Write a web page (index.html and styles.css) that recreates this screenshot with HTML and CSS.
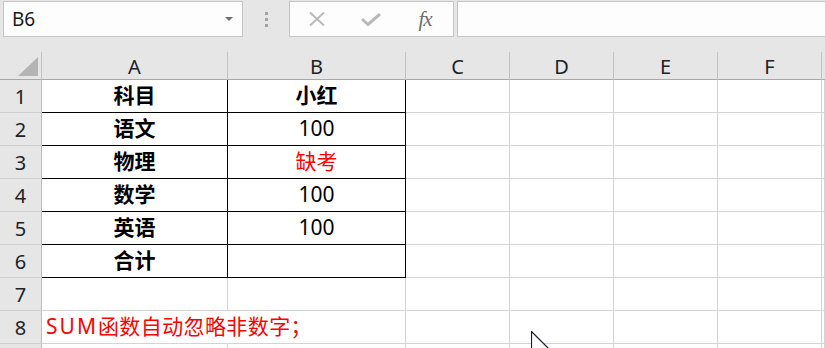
FILE: index.html
```html
<!DOCTYPE html>
<html lang="zh-CN">
<head>
  <meta charset="UTF-8">
  <meta name="viewport" content="width=device-width, initial-scale=1.0">
  <title>SUM 函数</title>
  <link rel="stylesheet" href="styles.css">
</head>
<body>
  <div class="toolbar">
    <div class="name-box">
      <span>B6</span>
      <span class="drop-arrow"></span>
    </div>
    <div class="grip">
      <span></span><span></span><span></span>
    </div>
    <div class="fx-box">
      <span class="fx-btn">
        <svg width="16" height="14" viewBox="0 0 16 14"><path d="M1 0.5 L15 13.5 M15 0.5 L1 13.5" stroke="#b9b9b9" stroke-width="2" fill="none"/></svg>
      </span>
      <span class="fx-btn">
        <svg width="20" height="13" viewBox="0 0 20 13"><path d="M1 6 L7 11.5 L19 1" stroke="#b9b9b9" stroke-width="3" fill="none"/></svg>
      </span>
      <span class="fx-btn fx-text">fx</span>
    </div>
    <div class="formula-input"></div>
  </div>

  <div class="sheet">
    <!-- cabecera de columnas -->
    <div class="corner"><span class="corner-tri"></span></div>
    <div class="col-head">A</div>
    <div class="col-head">B</div>
    <div class="col-head">C</div>
    <div class="col-head">D</div>
    <div class="col-head">E</div>
    <div class="col-head">F</div>
    <div class="col-head last"></div>

    <div class="row-head">1</div>
    <div class="cell tb bold">科目</div>
    <div class="cell tb bold">小红</div>
    <div class="cell"></div><div class="cell"></div><div class="cell"></div><div class="cell"></div><div class="cell"></div>

    <div class="row-head">2</div>
    <div class="cell tb bold">语文</div>
    <div class="cell tb">100</div>
    <div class="cell"></div><div class="cell"></div><div class="cell"></div><div class="cell"></div><div class="cell"></div>

    <div class="row-head">3</div>
    <div class="cell tb bold">物理</div>
    <div class="cell tb red">缺考</div>
    <div class="cell"></div><div class="cell"></div><div class="cell"></div><div class="cell"></div><div class="cell"></div>

    <div class="row-head">4</div>
    <div class="cell tb bold">数学</div>
    <div class="cell tb">100</div>
    <div class="cell"></div><div class="cell"></div><div class="cell"></div><div class="cell"></div><div class="cell"></div>

    <div class="row-head">5</div>
    <div class="cell tb bold">英语</div>
    <div class="cell tb">100</div>
    <div class="cell"></div><div class="cell"></div><div class="cell"></div><div class="cell"></div><div class="cell"></div>

    <div class="row-head">6</div>
    <div class="cell tb bold">合计</div>
    <div class="cell tb"></div>
    <div class="cell"></div><div class="cell"></div><div class="cell"></div><div class="cell"></div><div class="cell"></div>

    <div class="row-head">7</div>
    <div class="cell"></div><div class="cell"></div><div class="cell"></div><div class="cell"></div><div class="cell"></div><div class="cell"></div><div class="cell"></div>

    <div class="row-head">8</div>
    <div class="cell note"><span class="latin">SUM</span>函数自动忽略非数字；</div>
    <div class="cell"></div><div class="cell"></div><div class="cell"></div><div class="cell"></div><div class="cell"></div><div class="cell"></div>

    <!-- fila 9: solo asoma el borde superior -->
    <div class="row-head"></div>
    <div class="cell"></div><div class="cell"></div><div class="cell"></div><div class="cell"></div><div class="cell"></div><div class="cell"></div><div class="cell"></div>
  </div>

  <svg class="cursor" width="20" height="30" viewBox="0 0 20 30">
    <path d="M0.5 0.5 L0.5 24 L6 18.5 L10 27.5 L13 26.2 L9.2 17.5 L17.5 17.5 Z" fill="#fff" stroke="#1a1a2a" stroke-width="1.2"/>
  </svg>
</body>
</html>
```

FILE: styles.css
```css
* {
  margin: 0;
  padding: 0;
  box-sizing: border-box;
}

body {
  font-family: "Noto Sans", "Noto Sans CJK SC", sans-serif;
  background: #fff;
  width: 825px;
  height: 348px;
  overflow: hidden;
  position: relative;
  color: #000;
}

/* Barra de fórmulas */
.toolbar {
  display: flex;
  align-items: flex-start;
  height: 52px;
  padding: 1px 0 0 3px;
  background: #e6e6e6;
}

.name-box {
  width: 240px;
  height: 36px;
  border: 1px solid #c6c6c6;
  background: #fdfdfd;
  display: flex;
  align-items: center;
  justify-content: space-between;
  padding: 0 9px 0 8px;
  font-size: 19px;
  color: #1a1a1a;
}

.drop-arrow {
  width: 0;
  height: 0;
  border-left: 4px solid transparent;
  border-right: 4px solid transparent;
  border-top: 4px solid #6d6d6d;
}

.grip {
  width: 46px;
  height: 36px;
  display: flex;
  flex-direction: column;
  align-items: center;
  justify-content: center;
  gap: 3px;
}

.grip span {
  width: 3px;
  height: 3px;
  background: #a3a3a3;
}

.fx-box {
  width: 165px;
  height: 36px;
  border: 1px solid #c6c6c6;
  background: #fdfdfd;
  display: flex;
  align-items: center;
}

.fx-btn {
  width: 54px;
  display: flex;
  justify-content: center;
  align-items: center;
}

.fx-text {
  font-family: "Liberation Serif", serif;
  font-style: italic;
  font-size: 21px;
  color: #6e6e6e;
  letter-spacing: -1px;
}

.formula-input {
  flex: 1;
  height: 36px;
  margin-left: 3px;
  border: 1px solid #c6c6c6;
  border-right: none;
  background: #fdfdfd;
}

/* Hoja */
.sheet {
  display: grid;
  grid-template-columns: 42px 186px 178px 104px 104px 104px 104px 1fr;
  grid-template-rows: 28px;
  grid-auto-rows: 33px;
}

.corner,
.col-head {
  background: #e6e6e6;
  border-bottom: 1px solid #a8a8a8;
  border-right: 1px solid #c3c3c3;
}

.corner {
  position: relative;
}

.corner-tri {
  position: absolute;
  right: 3px;
  bottom: 3px;
  width: 0;
  height: 0;
  border-left: 20px solid transparent;
  border-bottom: 19px solid #b4b4b4;
}

.col-head {
  display: flex;
  align-items: flex-end;
  justify-content: center;
  padding-bottom: 2px;
  font-size: 20px;
  line-height: 1;
  color: #222;
}

.col-head.last {
  border-right: none;
}

.row-head {
  background: #e6e6e6;
  border-right: 1px solid #bdbdbd;
  border-bottom: 1px solid #cfcfcf;
  display: flex;
  align-items: center;
  justify-content: center;
  font-size: 20px;
  line-height: 1;
  color: #222;
  padding-top: 1px;
}

.cell {
  border-right: 1px solid #d4d4d4;
  border-bottom: 1px solid #d4d4d4;
  display: flex;
  align-items: flex-end;
  justify-content: center;
  padding-bottom: 6px;
  font-size: 21px;
  line-height: 1;
  white-space: nowrap;
}

.cell.tb {
  border-right-color: #000;
  border-bottom-color: #000;
}

.bold {
  font-weight: 700;
}

.red {
  color: #ff0000;
}

.note {
  color: #ff0000;
  justify-content: flex-start;
  padding-left: 4px;
  overflow: visible;
  border-right-color: transparent;
  letter-spacing: 0.4px;
}

.note .latin {
  letter-spacing: 2px;
}

.cursor {
  position: absolute;
  left: 531px;
  top: 331px;
}
```
